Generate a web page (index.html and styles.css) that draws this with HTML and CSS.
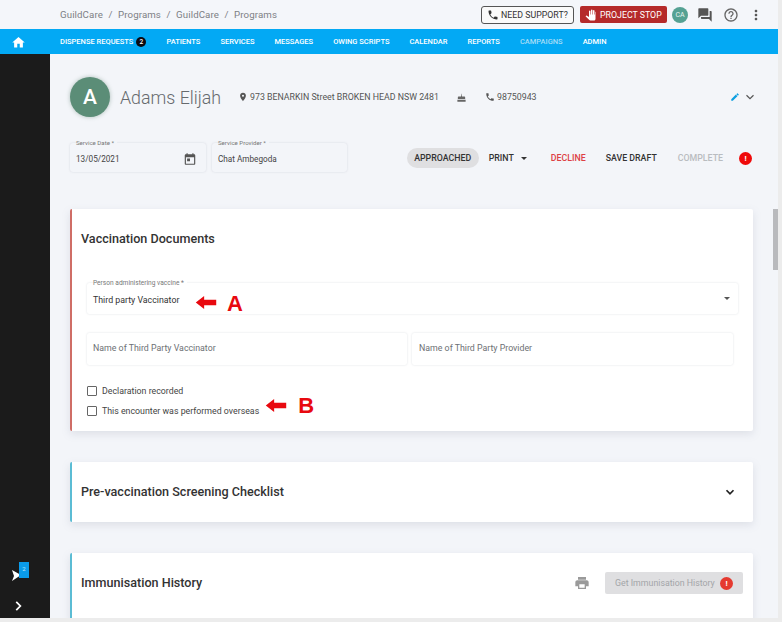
FILE: index.html
```html
<!DOCTYPE html>
<html lang="en">
<head>
<meta charset="utf-8">
<title>GuildCare</title>
<link rel="stylesheet" href="styles.css">
</head>
<body>
<div class="app">
  <header class="topbar">
    <div class="crumbs"><span>GuildCare</span><i>/</i><span>Programs</span><i>/</i><span>GuildCare</span><i>/</i><span>Programs</span></div>
    <div class="top-actions">
      <div class="support">
        <svg class="ic12" viewBox="0 0 24 24"><path fill="#333" d="M6.6 10.8c1.4 2.8 3.8 5.1 6.6 6.6l2.2-2.2c.3-.3.7-.4 1-.2 1.100.4 2.300.6 3.600.6.600 0 1 .4 1 1V20c0 .6-.4 1-1 1C10.600 21 3 13.400 3 4c0-.6.400-1 1-1h3.500c.6 0 1 .4 1 1 0 1.300.2 2.500.6 3.600.1.300 0 .7-.2 1z"/></svg>
        <span>NEED SUPPORT?</span>
      </div>
      <div class="stop">
        <svg class="ic12" viewBox="0 0 24 24"><path fill="#fff" d="M21 7v13c0 1.700-1.300 3-3 3h-7.300c-.8 0-1.600-.3-2.100-.9L1 14.500s1.300-1.200 1.300-1.200c.2-.2.500-.3.800-.2l4.900 2.800V4.500C8 3.700 8.700 3 9.500 3S11 3.700 11 4.500V11h1V2.500c0-.8.7-1.500 1.500-1.500s1.500.7 1.500 1.500V11h1V3.500c0-.8.7-1.500 1.500-1.500s1.500.7 1.500 1.500V11h1V7c0-.8.7-1.500 1.500-1.500S21 6.200 21 7z"/></svg>
        <span>PROJECT STOP</span>
      </div>
      <div class="ca">CA</div>
      <svg class="tool chat" viewBox="0 0 24 24"><path fill="#555" d="M21 6h-2v9H6v2c0 .6.400 1 1 1h11l4 4V7c0-.6-.4-1-1-1zm-4 6V3c0-.6-.4-1-1-1H3c-.6 0-1 .4-1 1v14l4-4h10c.6 0 1-.4 1-1z"/></svg>
      <svg class="tool help" viewBox="0 0 24 24"><path fill="#666" d="M11 18h2v-2h-2v2zm1-16C6.500 2 2 6.500 2 12s4.500 10 10 10 10-4.500 10-10S17.500 2 12 2zm0 18c-4.400 0-8-3.600-8-8s3.600-8 8-8 8 3.600 8 8-3.600 8-8 8zm0-14c-2.200 0-4 1.800-4 4h2c0-1.100.9-2 2-2s2 .9 2 2c0 2-3 1.800-3 5h2c0-2.300 3-2.500 3-5 0-2.200-1.800-4-4-4z"/></svg>
      <svg class="tool" viewBox="0 0 24 24"><path fill="#555" d="M12 8c1.100 0 2-.9 2-2s-.9-2-2-2-2 .9-2 2 .9 2 2 2zm0 2c-1.100 0-2 .9-2 2s.9 2 2 2 2-.9 2-2-.9-2-2-2zm0 6c-1.100 0-2 .9-2 2s.9 2 2 2 2-.9 2-2-.9-2-2-2z"/></svg>
    </div>
  </header>

  <nav class="navbar">
    <div class="home"><svg class="ic15" viewBox="0 0 24 24"><path fill="#fff" d="M10 20v-6h4v6h5v-8h3L12 3 2 12h3v8z"/></svg></div>
    <ul class="menu">
      <li>DISPENSE REQUESTS <b class="count">2</b></li>
      <li>PATIENTS</li>
      <li>SERVICES</li>
      <li>MESSAGES</li>
      <li>OWING SCRIPTS</li>
      <li>CALENDAR</li>
      <li>REPORTS</li>
      <li class="dim">CAMPAIGNS</li>
      <li>ADMIN</li>
    </ul>
  </nav>

  <div class="body-row">
    <aside class="sidebar">
      <div class="send">
        <svg class="send-ic" viewBox="0 0 9 11"><path fill="#fff" d="M0 0l9 5-9 6 2-5z"/></svg>
        <span class="send-badge">2</span>
      </div>
      <svg class="ic14" viewBox="0 0 24 24"><path fill="none" stroke="#fff" stroke-width="3" d="M9 5l7 7-7 7"/></svg>
    </aside>

    <main class="main">
      <section class="patient">
        <div class="avatar">A</div>
        <h1>Adams Elijah</h1>
        <div class="info addr">
          <svg class="ic10" viewBox="0 0 24 24"><path fill="#555" d="M12 2C8.100 2 5 5.100 5 9c0 5.200 7 13 7 13s7-7.800 7-13c0-3.900-3.100-7-7-7zm0 9.500a2.500 2.500 0 1 1 0-5 2.500 2.500 0 0 1 0 5z"/></svg>
          <span>973 BENARKIN Street BROKEN HEAD NSW 2481</span>
        </div>
        <svg class="ic11 cake" viewBox="0 0 24 24"><path fill="#666" d="M12 3l1 3h-2zM11 7h2v3h5c1.100 0 2 .9 2 2v3H4v-3c0-1.100.9-2 2-2h5zM3 17h18v4H3z"/></svg>
        <div class="info">
          <svg class="ic10" viewBox="0 0 24 24"><path fill="#555" d="M6.600 10.800c1.400 2.800 3.800 5.100 6.600 6.600l2.200-2.200c.3-.3.700-.4 1-.2 1.100.4 2.300.6 3.600.6.600 0 1 .4 1 1V20c0 .6-.4 1-1 1C10.600 21 3 13.400 3 4c0-.6.400-1 1-1h3.500c.6 0 1 .4 1 1 0 1.300.2 2.500.6 3.600.1.300 0 .7-.2 1z"/></svg>
          <span>98750943</span>
        </div>
        <div class="patient-tools">
          <svg class="ic10" viewBox="0 0 24 24"><path fill="#0d9fe0" d="M3 17.300V21h3.700L17.800 9.900l-3.700-3.700zM20.700 7c.4-.4.400-1 0-1.400l-2.300-2.300c-.4-.4-1-.4-1.400 0l-1.800 1.800 3.700 3.700z"/></svg>
          <svg class="ic14" viewBox="0 0 24 24"><path fill="none" stroke="#555" stroke-width="2" d="M6 9l6 6 6-6"/></svg>
        </div>
      </section>

      <section class="service">
        <div class="svc-field date">
          <label>Service Date *</label>
          <span>13/05/2021</span>
          <svg class="ic14" viewBox="0 0 24 24"><path fill="#555" d="M19 4h-1V2h-2v2H8V2H6v2H5c-1.100 0-2 .9-2 2v14c0 1.100.9 2 2 2h14c1.100 0 2-.9 2-2V6c0-1.100-.9-2-2-2zm0 16H5V9h14zM7 11h5v5H7z"/></svg>
        </div>
        <div class="svc-field provider">
          <label>Service Provider *</label>
          <span>Chat Ambegoda</span>
        </div>
        <div class="actions">
          <span class="chip">APPROACHED</span>
          <span class="act print">PRINT<em class="caret"></em></span>
          <span class="act red">DECLINE</span>
          <span class="act">SAVE DRAFT</span>
          <span class="act off">COMPLETE</span>
          <span class="alert">!</span>
        </div>
      </section>

      <section class="card card-red">
        <h2>Vaccination Documents</h2>
        <div class="select-field">
          <label>Person administering vaccine *</label>
          <span class="sel-value">Third party Vaccinator</span>
          <svg class="mark-arrow arrow-a" viewBox="0 0 22 14"><path fill="#e8090f" d="M0 7l9-7v4h13v6H9v4z"/></svg>
          <span class="mark mark-a">A</span>
          <em class="caret sel-caret"></em>
        </div>
        <div class="inputs">
          <div class="text-input first">Name of Third Party Vaccinator</div>
          <div class="text-input">Name of Third Party Provider</div>
        </div>
        <div class="checks">
          <div class="check"><i></i><span>Declaration recorded</span></div>
          <div class="check"><i></i><span>This encounter was performed overseas</span>
            <svg class="mark-arrow arrow-b" viewBox="0 0 22 14"><path fill="#e8090f" d="M0 7l9-7v4h13v6H9v4z"/></svg>
            <span class="mark mark-b">B</span>
          </div>
        </div>
      </section>

      <section class="card card-blue collapsed">
        <h2>Pre-vaccination Screening Checklist</h2>
        <svg class="ic14" viewBox="0 0 24 24"><path fill="none" stroke="#222" stroke-width="3" d="M6 9l6 6 6-6"/></svg>
      </section>

      <section class="card card-blue history">
        <h2>Immunisation History</h2>
        <svg class="ic16 printer" viewBox="0 0 24 24"><path fill="#9a9a9a" d="M19 8H5c-1.700 0-3 1.300-3 3v6h4v4h12v-4h4v-6c0-1.700-1.300-3-3-3zm-3 11H8v-5h8zM18 3H6v4h12z"/></svg>
        <div class="get-btn"><span>Get Immunisation History</span><b>!</b></div>
      </section>
    </main>
  </div>
  <div class="scroll-thumb"></div>
</div>
</body>
</html>
```

FILE: styles.css
```css
* { box-sizing: border-box; }
html, body { margin: 0; padding: 0; height: 100%; overflow: hidden; background: #ececec; }
body { font-family: Roboto, "Liberation Sans", sans-serif; color: #333; }
svg { display: block; flex: none; }
.ic10 { width: 10px; height: 10px; }
.ic11 { width: 11px; height: 11px; }
.ic12 { width: 12px; height: 12px; }
.ic14 { width: 14px; height: 14px; }
.ic15 { width: 15px; height: 15px; }
.ic16 { width: 16px; height: 16px; }

.app { position: relative; width: 778px; height: 618px; background: #f3f5f9; display: flex; flex-direction: column; overflow: hidden; }

.topbar { height: 29px; flex: none; display: flex; align-items: center; justify-content: space-between; padding: 0 14px 0 60px; background: #f4f6fa; }
.crumbs { display: flex; gap: 5.5px; font-size: 9.7px; color: #7d8085; letter-spacing: .1px; }
.crumbs i { font-style: normal; }
.top-actions { display: flex; align-items: center; }
.support { display: flex; align-items: center; gap: 2px; width: 93px; height: 18px; padding-left: 5px; margin-right: 6px; border: 1px solid #555; border-radius: 3px; background: #fafafa; font-size: 8.8px; color: #333; white-space: nowrap; }
.stop { display: flex; align-items: center; gap: 3px; width: 87px; height: 17px; padding-left: 5px; margin-right: 5px; background: #b52a2a; border-radius: 2px; color: #fff; font-size: 8.8px; white-space: nowrap; }
.ca { width: 16px; height: 16px; border-radius: 50%; background: #55a193; color: #e8f3f0; font-size: 7px; line-height: 16px; text-align: center; margin-right: 9px; }
.tool { width: 16px; height: 16px; }
.chat { margin-right: 10px; }
.help { margin-right: 9px; }

.navbar { height: 25px; flex: none; display: flex; align-items: center; background: #03a9f4; color: #fff; }
.home { width: 60px; display: flex; justify-content: center; padding-right: 24px; padding-top: 1px; }
.menu { list-style: none; margin: 0; padding: 0; display: flex; gap: 20px; font-size: 7.5px; font-weight: 500; white-space: nowrap; }
.menu li { display: flex; align-items: center; gap: 2px; height: 12px; }
.menu .dim { color: #a5dcf6; }
.count { width: 10px; height: 10px; border-radius: 50%; background: #0a0a12; color: #fff; font-size: 6.5px; line-height: 10px; text-align: center; margin-left: 1px; font-weight: 500; }

.body-row { flex: 1; display: flex; min-height: 0; }
.sidebar { width: 50px; flex: none; background: #1b1b1b; display: flex; flex-direction: column; justify-content: flex-end; align-items: center; padding: 0 14px 5px 0; gap: 18px; }
.send { position: relative; width: 20px; height: 20px; }
.send-ic { position: absolute; left: 4px; bottom: 0; width: 9px; height: 11px; }
.send-badge { position: absolute; left: 11px; top: 1px; width: 10px; height: 16px; background: #0a9bea; color: #bfe6fb; font-size: 6px; line-height: 14px; text-align: center; }

.main { flex: 1; min-width: 0; padding-left: 20px; overflow: hidden; }

.patient { display: flex; align-items: center; height: 40px; margin-top: 23px; margin-right: 21px; }
.avatar { width: 40px; height: 40px; border-radius: 50%; background: #5b8d77; color: #fff; font-size: 21px; font-weight: 500; line-height: 40px; text-align: center; box-shadow: 0 0 4px rgba(70,110,90,.4); }
.patient h1 { margin: 0 0 0 10px; width: 118px; font-size: 17.8px; font-weight: 300; color: #666a6e; white-space: nowrap; }
.info { display: flex; align-items: center; gap: 2px; font-size: 8.8px; color: #555; white-space: nowrap; }
.addr { width: 218px; }
.cake { margin-right: 18px; }
.patient-tools { margin-left: auto; display: flex; align-items: center; gap: 3px; }

.service { display: flex; margin-top: 16px; height: 44px; align-items: flex-start; margin-right: 26px; }
.svc-field { position: relative; display: flex; align-items: center; justify-content: space-between; height: 29px; margin-top: 10px; padding: 2px 9px 0 6px; border-radius: 3px; background: #f3f5f9; box-shadow: 0 0 2px rgba(120,130,145,.25); font-size: 8.2px; color: #444; }
.svc-field label { position: absolute; left: 6px; top: -4px; font-size: 6.1px; color: #777; background: #f3f5f9; padding-right: 3px; }
.date { width: 136px; margin-right: 6px; }
.provider { width: 135px; }
.actions { margin-left: auto; display: flex; align-items: center; height: 20px; margin-top: 15px; font-size: 8.8px; font-weight: 500; color: #333; white-space: nowrap; }
.chip { background: #dfdfe1; border-radius: 10px; width: 72px; height: 20px; line-height: 20px; text-align: center; margin-right: 10px; }
.act { margin-right: 20px; }
.print { display: flex; align-items: center; gap: 7px; margin-right: 24px; }
.off { color: #b9bcc0; margin-right: 16px; margin-left: 1px; }
.red { color: #dd4044; }
.caret { display: block; width: 0; height: 0; border-left: 3.500px solid transparent; border-right: 3.500px solid transparent; border-top: 3.500px solid #333; }
.alert { width: 13px; height: 13px; border-radius: 50%; background: #ef0a0a; color: #fff; font-size: 8px; line-height: 13px; text-align: center; font-weight: 700; }

.card { background: #fff; border-left: 2px solid #5bbcd4; border-radius: 2px; width: 683px; box-shadow: 0 3px 9px rgba(120,130,150,.18); }
.card h2 { margin: 0; font-size: 12.6px; font-weight: 500; color: #333; }
.card-red { border-left-color: #cf6d66; height: 222px; margin-top: 32px; padding: 22px 15px 0 9px; }
.select-field { position: relative; display: flex; align-items: center; height: 31px; margin: 37px 0 0 6px; padding: 3px 0 0 6px; border-radius: 2px; box-shadow: 0 0 2px rgba(120,130,145,.25); font-size: 8.8px; color: #333; }
.select-field label { position: absolute; left: 6px; top: -4px; font-size: 6.6px; color: #777; background: #fff; padding-right: 3px; }
.sel-value { width: 102px; }
.mark-arrow { width: 22px; height: 13px; }
.mark { color: #e8090f; font-family: "Liberation Sans", sans-serif; font-weight: 700; font-size: 22px; line-height: 1; }
.arrow-a { margin-top: 4px; }
.mark-a { margin-left: 10px; margin-top: 8px; }
.sel-caret { position: absolute; right: 8px; top: 14px; border-top-color: #555; }
.inputs { display: flex; gap: 5px; margin: 19px 0 0 6px; }
.text-input { width: 321px; height: 32px; line-height: 30px; padding-left: 7px; font-size: 8.8px; color: #6d7074; border-radius: 2px; box-shadow: 0 0 2px rgba(120,130,145,.25); }
.text-input.first { width: 320px; padding-left: 6px; }
.checks { margin: 21px 0 0 6px; display: flex; flex-direction: column; gap: 10px; }
.check { display: flex; align-items: center; height: 10px; font-size: 8.8px; color: #444; white-space: nowrap; }
.check i { width: 10px; height: 10px; border: 1px solid #666; border-radius: 1px; margin-right: 5px; }
.arrow-b { margin-left: 6px; margin-bottom: 12px; }
.mark-b { margin-left: 11px; margin-bottom: 10px; }

.collapsed { display: flex; align-items: center; justify-content: space-between; height: 60px; margin-top: 31px; padding: 0 16px 0 9px; }
.collapsed h2, .history h2 { margin-bottom: 2px; }
.history { display: flex; align-items: center; height: 70px; margin-top: 31px; padding: 0 10px 10px 9px; }
.printer { margin-left: auto; margin-right: 15px; }
.get-btn { display: flex; align-items: center; justify-content: space-between; width: 138px; height: 22px; padding: 0 10px; background: #dfdfe1; border-radius: 2px; font-size: 8.8px; color: #a3a5a8; white-space: nowrap; }
.get-btn b { width: 13px; height: 13px; border-radius: 50%; background: #e53a30; color: #fff; font-size: 8px; line-height: 13px; text-align: center; }

.scroll-thumb { position: absolute; right: 0; top: 209px; width: 5px; height: 61px; background: #b9babd; }
```
